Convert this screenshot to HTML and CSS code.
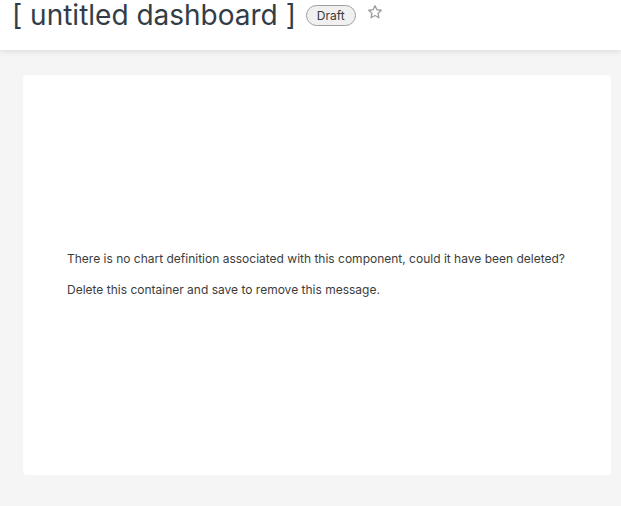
FILE: index.html
```html
<!DOCTYPE html>
<html>
<head>
<meta charset="utf-8">
<link rel="stylesheet" href="styles.css">
</head>
<body>
<header class="header">
  <h1 class="title">[ untitled dashboard ]</h1>
  <span class="badge">Draft</span>
  <svg class="star" width="16" height="16" viewBox="0 0 24 24"><path d="M12 2.5l2.9 6.1 6.6.8-4.9 4.6 1.3 6.6L12 17.3l-5.9 3.3 1.3-6.6-4.9-4.6 6.6-.8z" fill="none" stroke="#9e9e9e" stroke-width="2" stroke-linejoin="round"/></svg>
</header>
<main class="content">
  <section class="card">
    <p class="msg">There is no chart definition associated with this component, could it have been deleted?</p>
    <p class="msg">Delete this container and save to remove this message.</p>
  </section>
</main>
</body>
</html>
```
FILE: styles.css
```css
html, body {
  margin: 0;
  padding: 0;
  background: #f5f5f5;
  font-family: Inter, "Noto Sans", sans-serif;
}
.header {
  height: 50px;
  background: #fff;
  display: flex;
  align-items: flex-start;
  padding-left: 12px;
  box-shadow: 0 1px 6px rgba(0,0,0,0.12);
  position: relative;
  box-sizing: border-box;
}
.title {
  margin: 0;
  font-size: 28px;
  font-weight: 400;
  line-height: 30px;
  color: #323d47;
}
.badge {
  margin-left: 10px;
  margin-top: 5px;
  height: 21px;
  box-sizing: border-box;
  padding: 0 10px;
  border: 1px solid #a0a0a0;
  border-radius: 11px;
  background: #f0f0f0;
  font-size: 12px;
  line-height: 19px;
  color: #3a3a3a;
}
.star {
  margin-left: 11px;
  margin-top: 4px;
}
.content {
  padding: 25px 10px 31px 23px;
}
.card {
  height: 400px;
  background: #fff;
  border-radius: 4px;
  display: flex;
  flex-direction: column;
  justify-content: center;
  padding-left: 44px;
  padding-bottom: 2px;
  box-sizing: border-box;
}
.msg {
  margin: 0;
  font-size: 12px;
  line-height: 16px;
  color: #3c3c3c;
}
.msg + .msg {
  margin-top: 15px;
}
```
